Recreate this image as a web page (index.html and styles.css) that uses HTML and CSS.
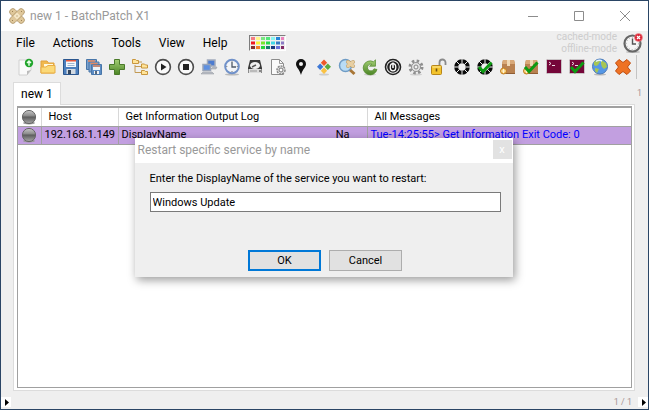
FILE: index.html
```html
<!DOCTYPE html>
<html lang="en">

<head>
    <meta charset="UTF-8">
    <meta name="viewport" content="width=device-width, initial-scale=1.0">
    <title>new 1 - BatchPatch X1</title>
    <link rel="stylesheet" href="styles.css">
</head>

<body>
    <!-- Shared shapes -->
    <svg class="defs" width="0" height="0" aria-hidden="true">
        <defs>
            <linearGradient id="ball" x1="0" y1="0" x2="0" y2="1">
                <stop offset="0" stop-color="#c8c8c8" />
                <stop offset=".42" stop-color="#8a8a8a" />
                <stop offset=".5" stop-color="#5c5c5c" />
                <stop offset="1" stop-color="#a9a9a9" />
            </linearGradient>
            <linearGradient id="green" x1="0" y1="0" x2="0" y2="1">
                <stop offset="0" stop-color="#a3cf74" />
                <stop offset="1" stop-color="#4c8526" />
            </linearGradient>
            <symbol id="status" viewBox="0 0 16 16">
                <ellipse cx="8" cy="14" rx="6" ry="1.5" fill="#999" />
                <circle cx="8" cy="8" r="6.6" fill="url(#ball)" stroke="#666" />
            </symbol>
            <symbol id="wheel" viewBox="0 0 18 18">
                <circle cx="9" cy="9" r="5.8" fill="none" stroke="#0a0a0a" stroke-width="4" />
                <path d="M9 0v5M9 13v5M0 9h5M13 9h5M2.6 2.6l3.6 3.6M11.8 11.8l3.6 3.6M15.4 2.6l-3.6 3.6M6.2 11.8l-3.6 3.6" stroke="#efefef" stroke-width="1" />
            </symbol>
            <symbol id="check" viewBox="0 0 18 18">
                <path d="M3 9l4 4.5L15.500 4.500" fill="none" stroke="#0d9a12" stroke-width="3" />
            </symbol>
            <symbol id="box" viewBox="0 0 18 18">
                <path d="M4 2h11l1 4v9H3V6z" fill="#b98150" />
                <path d="M4 2h11l1 4H3z" fill="#d8a878" />
                <path d="M8 2h3v6H8z" fill="#f0d8b5" />
                <path d="M3 15.500h13" stroke="#8f5d33" />
                <circle cx="4.500" cy="13" r="3" fill="#f6c35f" stroke="#c07d24" />
                <path d="M4.500 11v4M2.500 13h4" stroke="#fff5d5" />
            </symbol>
            <symbol id="console" viewBox="0 0 18 18">
                <rect x="1.500" y="1.500" width="15" height="14" rx="1" fill="#750639" stroke="#c9c4c6" />
                <path d="M4 4l2 1.500L4 7M7 7.500h3" fill="none" stroke="#eddbe4" />
            </symbol>
        </defs>
    </svg>

    <div class="window">
        <header class="titlebar">
            <svg class="app-icon" viewBox="0 0 16 16" aria-hidden="true">
                <g fill="#dfc79a" stroke="#a88e61" stroke-width=".7">
                    <rect x="-1" y="4.800" width="18" height="6.400" rx="3" transform="rotate(45 8 8)" />
                    <rect x="-1" y="4.800" width="18" height="6.400" rx="3" transform="rotate(-45 8 8)" />
                </g>
                <path d="M8 4.500L11.500 8 8 11.500 4.500 8z" fill="#f5e6c6" />
                <path d="M3 3h1v1H3zM12 3h1v1h-1zM3 12h1v1H3zM12 12h1v1h-1zM7.500 7.500h1v1h-1z" fill="#9d8255" />
            </svg>
            <h1>new 1 - BatchPatch X1</h1>
            <div class="window-buttons">
                <button aria-label="Minimize"><svg viewBox="0 0 10 10"><path d="M0 5.500h10" /></svg></button>
                <button aria-label="Maximize"><svg viewBox="0 0 10 10"><path d="M.5.5h9v9h-9z" /></svg></button>
                <button aria-label="Close"><svg viewBox="0 0 10 10"><path d="M0 0l10 10M10 0L0 10" /></svg></button>
            </div>
        </header>

        <div class="menubar">
            <nav>
                <button>File</button>
                <button>Actions</button>
                <button>Tools</button>
                <button>View</button>
                <button>Help</button>
            </nav>
            <button class="palette" aria-label="Row colors">
                <svg viewBox="0 0 35 14" aria-hidden="true">
                    <g stroke-width="3">
                        <path d="M1 2.500h4" stroke="#f47c82" /><path d="M6 2.500h4" stroke="#fff68b" /><path d="M11 2.500h4" stroke="#7be582" /><path d="M16 2.500h4" stroke="#50e878" /><path d="M21 2.500h4" stroke="#88f4f0" /><path d="M26 2.500h4" stroke="#2585d8" /><path d="M31 2.500h3" stroke="#ec82bd" />
                        <path d="M1 7h4" stroke="#f01822" /><path d="M6 7h4" stroke="#f9f23a" /><path d="M11 7h4" stroke="#78e52d" /><path d="M16 7h4" stroke="#25d94d" /><path d="M21 7h4" stroke="#42d9e7" /><path d="M26 7h4" stroke="#347bc4" /><path d="M31 7h3" stroke="#8b7bc4" />
                        <path d="M1 11.500h4" stroke="#852c31" /><path d="M6 11.500h4" stroke="#f37c27" /><path d="M11 11.500h4" stroke="#27d43a" /><path d="M16 11.500h4" stroke="#177a72" /><path d="M21 11.500h4" stroke="#17377e" /><path d="M26 11.500h4" stroke="#6771da" /><path d="M31 11.500h3" stroke="#812a65" />
                    </g>
                </svg>
            </button>
            <p class="modes">cached-mode<br>offline-mode</p>
            <svg class="clock" viewBox="0 0 20 20" aria-hidden="true">
                <ellipse cx="10" cy="19" rx="7" ry="1" fill="#bbb" />
                <circle cx="9.500" cy="10.500" r="8" fill="#f5f5f5" stroke="#666" stroke-width="2.200" />
                <circle cx="9.500" cy="10.500" r="6" fill="none" stroke="#aaa" stroke-dasharray="1 2" />
                <path d="M9.500 5.500V11H13" fill="none" stroke="#555" stroke-width="1.400" />
                <circle cx="15.500" cy="4.500" r="4" fill="#db2637" stroke="#f09aa0" stroke-width=".6" />
                <path d="M14 3l3 3M17 3l-3 3" stroke="#fff" stroke-width="1.200" />
            </svg>
        </div>

        <div class="toolbar">
            <button aria-label="New grid"><svg viewBox="0 0 18 18"><path d="M3 2h12v10l-4 5H3z" fill="#fafafa" stroke="#d0d0d0" /><path d="M15 12l-4 1v4z" fill="#bbb" /><circle cx="13" cy="5" r="4.200" fill="#22a52c" /><path d="M13 7.800V4M11 5l2-2 2 2" fill="none" stroke="#eaffea" stroke-width="1.500" /></svg></button>
            <button aria-label="Open"><svg viewBox="0 0 18 18"><path d="M2 15V3h6l1.500 2H15v10z" fill="#f1b84e" stroke="#e0a13c" /><path d="M5 6h9v4H5z" fill="#fff8df" /><path d="M2 9h5l2-1.500h7V15H2z" fill="#fbd978" stroke="#e9ad43" /></svg></button>
            <button aria-label="Save"><svg viewBox="0 0 18 18"><path d="M1.500 1.500h15v15h-15z" fill="#4c7fbd" stroke="#2b568e" /><path d="M4 2h10v7H4z" fill="#f5f8fc" /><path d="M4 2h10v1.500H4z" fill="#e4573b" /><path d="M5.500 5.500h7M5.500 7.500h7" stroke="#9fb6d0" /><path d="M4.500 11h9v5h-9z" fill="#d3dae2" /><path d="M6 12h3v4H6z" fill="#34465d" /></svg></button>
            <button aria-label="Save all"><svg viewBox="0 0 18 18"><g stroke="#4876a9"><path d="M1.500 1.500h10v10h-10z" fill="#7aa1ce" /><path d="M4 4h10v10H4z" fill="#7aa1ce" /><path d="M6.500 6.500h10v10h-10z" fill="#5c8dc5" /></g><path d="M3 3h7M5.500 5.500h7M8 8h7" stroke="#e48861" stroke-width="1.400" /><path d="M8 9h7v3H8zM9 13h5v3H9z" fill="#eef3f8" /><path d="M10 13h2v3h-2z" fill="#56687c" /></svg></button>
            <button aria-label="Add hosts"><svg viewBox="0 0 18 18"><path d="M6.500 1.500h5v5h5v5h-5v5h-5v-5h-5v-5h5z" fill="url(#green)" stroke="#4a7a2a" /></svg></button>
            <button aria-label="Host tree"><svg viewBox="0 0 18 18"><path d="M4 7v7.500h7M4 8.500h7M8 4h3" fill="none" stroke="#c29a54" /><g fill="#ffe49a" stroke="#c8963d"><path d="M1.500 5.500v-4h3l1 1h2v3zM10.500 10V6h3l1 1h2v3zM10.500 16.500v-4h3l1 1h2v3z" /></g></svg></button>
            <button aria-label="Start"><svg viewBox="0 0 18 18"><circle cx="9" cy="9" r="7.400" fill="#fafafa" stroke="#4d4d4d" stroke-width="1.600" /><path d="M7 5.500l5.500 3.500L7 12.500z" fill="#222" /></svg></button>
            <button aria-label="Stop"><svg viewBox="0 0 18 18"><circle cx="9" cy="9" r="7.400" fill="#fafafa" stroke="#4d4d4d" stroke-width="1.600" /><path d="M6 6h6v6H6z" fill="#222" /></svg></button>
            <button aria-label="Computers"><svg viewBox="0 0 18 18"><path d="M7.500 2h7.500v6H7.500z" fill="#4b7bd0" stroke="#a2acbd" stroke-width="1.500" /><path d="M3 6.500h7.500v6H3z" fill="#5e90e0" stroke="#98a4b8" stroke-width="1.500" /><path d="M1 16l2-2h9l2 2zM11 11l2-2h4l-1 2z" fill="#babec6" stroke="#92969d" stroke-width=".5" /></svg></button>
            <button aria-label="Scheduler"><svg viewBox="0 0 18 18"><ellipse cx="9" cy="16.500" rx="7" ry="1" fill="#bbb" /><circle cx="9" cy="8.500" r="6.800" fill="#f3f5f8" stroke="#7091c9" stroke-width="2" /><path d="M9 4v5h4" fill="none" stroke="#4f5968" stroke-width="1.300" /><path d="M9 2.800v1M9 13v1M3.300 8.500h1M13.800 8.500h1" stroke="#777" /></svg></button>
            <button aria-label="Disk space"><svg viewBox="0 0 18 18"><path d="M4 2h10l2 8v5H2v-5z" fill="#3a3a3a" /><path d="M2.500 11h13v4h-13z" fill="#ddd" /><ellipse cx="9" cy="7.500" rx="5" ry="3.500" fill="#f0f0f0" /><path d="M6 9l4-2" stroke="#555" stroke-width="1.500" /><path d="M4 13h7" stroke="#999" /><path d="M13 13h2" stroke="#333" /></svg></button>
            <button aria-label="File settings"><svg viewBox="0 0 18 18"><path d="M2.500 1.500h8l4 4v11h-12z" fill="#fafafa" stroke="#8c8c8c" /><path d="M10.500 1.500v4h4" fill="none" stroke="#999" /><circle cx="12" cy="12" r="4" fill="#e0e0e0" stroke="#888" stroke-width="1.500" stroke-dasharray="2 1" /><circle cx="12" cy="12" r="2" fill="#fff" stroke="#777" /></svg></button>
            <button aria-label="Location"><svg viewBox="0 0 18 18"><path d="M9 1a5 5 0 0 0-5 5c0 3.500 3.500 5 5 11 1.500-6 5-7.500 5-11a5 5 0 0 0-5-5z" fill="#111" /><circle cx="9" cy="6" r="2" fill="#f4f4f4" /></svg></button>
            <button aria-label="Windows update"><svg viewBox="0 0 18 18"><ellipse cx="9" cy="16.500" rx="5" ry="1" fill="#ccc" /><path d="M9 1.500l3.200 3.200L9 7.900 5.800 4.700z" fill="#ee5a2b" /><path d="M5.200 5.500l3.200 3.200-3.200 3.200L2 8.700z" fill="#3e78d6" /><path d="M12.800 5.500L16 8.700l-3.200 3.200-3.200-3.200z" fill="#5ba940" /><path d="M9 9.500l3.200 3.200L9 15.900l-3.200-3.200z" fill="#fac243" /></svg></button>
            <button aria-label="Find updates"><svg viewBox="0 0 18 18"><path d="M11 11l5.500 5" stroke="#a87636" stroke-width="3" /><circle cx="7.500" cy="7.500" r="6" fill="#b9dcf6" stroke="#6f9cc5" stroke-width="1.500" /><g stroke="#b79a68" stroke-width="4" stroke-linecap="round"><path d="M10 4l5 4M15 4l-5 4" /></g><path d="M10 4l5 4M15 4l-5 4" stroke="#e8cfa2" stroke-width="3" stroke-linecap="round" /></svg></button>
            <button aria-label="Reboot"><svg viewBox="0 0 18 18"><ellipse cx="9" cy="16.500" rx="6" ry="1" fill="#ccc" /><path d="M10.800 6.200A3.400 3.400 0 1 0 13 10.800l3 .7A7 7 0 1 1 12.500 3.700L14.500 1.800v6.400H8.500z" fill="url(#green)" stroke="#52862d" stroke-width=".7" /></svg></button>
            <button aria-label="Shutdown"><svg viewBox="0 0 18 18"><circle cx="9" cy="9" r="7.500" fill="#f4f4f4" stroke="#222" stroke-width="1.600" /><circle cx="9" cy="9" r="5.800" fill="#222" /><ellipse cx="9" cy="9.300" rx="2.800" ry="3.600" fill="none" stroke="#fff" stroke-width="1.300" /><path d="M9 4.500V10" stroke="#fff" stroke-width="1.500" /></svg></button>
            <button aria-label="Services"><svg viewBox="0 0 18 18"><ellipse cx="9" cy="16.500" rx="6" ry="1" fill="#d0d0d0" /><circle cx="9" cy="9" r="6" fill="none" stroke="#8f8f8f" stroke-width="3" stroke-dasharray="2.400 2.300" /><circle cx="9" cy="9" r="4.500" fill="#e2e2e2" stroke="#919191" /><circle cx="9" cy="9" r="2" fill="#efefef" stroke="#888" /></svg></button>
            <button aria-label="Unlock"><svg viewBox="0 0 18 18"><path d="M9.500 8V4.500a3 3 0 0 1 6 0V7" fill="none" stroke="#8a8a8a" stroke-width="1.800" /><rect x="1.500" y="7.500" width="10" height="9" rx="1" fill="#f3c32c" stroke="#b7861a" /><path d="M2.500 9h8" stroke="#ffec9c" /><path d="M6.500 10.500v3" stroke="#735310" stroke-width="1.600" /></svg></button>
            <button aria-label="Job queue"><svg><use href="#wheel" /></svg></button>
            <button aria-label="Run job queue"><svg><use href="#wheel" /><use href="#check" /></svg></button>
            <button aria-label="Deploy"><svg><use href="#box" /></svg></button>
            <button aria-label="Run deploy"><svg><use href="#box" /><use href="#check" /></svg></button>
            <button aria-label="Remote command"><svg><use href="#console" /></svg></button>
            <button aria-label="Run remote command"><svg><use href="#console" /><use href="#check" /></svg></button>
            <button aria-label="Internet"><svg viewBox="0 0 18 18"><ellipse cx="9" cy="16.500" rx="6" ry="1" fill="#bbb" /><circle cx="9" cy="8.500" r="7.500" fill="#5597e6" stroke="#4a7ab8" /><path d="M3 4c3-3 6-2 6 0L7 7 5 8 3 7zM10 2l5 3 1 4-3 2-2-2-1-3zM4 10l4 1-2 4-2-2z" fill="#a7c653" /><path d="M5 3.500q3-2 6-.5" stroke="#e7f5ff" fill="none" stroke-width="1.500" /></svg></button>
            <button aria-label="Remove"><svg viewBox="0 0 18 18"><path d="M5 1.500L9 4.500l4-3L16.500 5l-3 4 3 4-3.500 3.500L9 13.500l-4 3L1.500 13l3-4-3-4z" fill="#ee7224" stroke="#c14b0c" stroke-linejoin="round" /></svg></button>
        </div>

        <div class="tabs">
            <button class="tab">new 1</button>
            <span class="small">1</span>
        </div>

        <main class="tab-page">
            <div class="grid">
                <table>
                    <thead>
                        <tr>
                            <th class="col-status"><svg role="img" aria-label="Status"><use href="#status" /></svg></th>
                            <th class="col-host">Host</th>
                            <th class="col-log">Get Information Output Log</th>
                            <th>All Messages</th>
                        </tr>
                    </thead>
                    <tbody>
                        <tr>
                            <td class="col-status"><svg role="img" aria-label="Idle"><use href="#status" /></svg></td>
                            <td>192.168.1.149</td>
                            <td><div class="log"><span>DisplayName</span><span>Na</span></div></td>
                            <td class="message">Tue-14:25:55&gt; Get Information Exit Code: 0</td>
                        </tr>
                    </tbody>
                </table>
            </div>
        </main>

        <footer class="statusbar">
            <button class="arrow" aria-label="Expand left"><svg viewBox="0 0 10 10"><path d="M4 2l4 3.500L4 9z" /></svg></button>
            <span class="small">1 / 1</span>
            <button class="arrow" aria-label="Expand right"><svg viewBox="0 0 10 10"><path d="M4 2l4 3.500L4 9z" /></svg></button>
        </footer>
    </div>

    <!-- Restart service prompt -->
    <form class="dialog" role="dialog" aria-labelledby="dialog-title">
        <div class="dialog-title">
            <h2 id="dialog-title">Restart specific service by name</h2>
            <button type="button" class="dialog-close" aria-label="Close">x</button>
        </div>
        <div class="dialog-body">
            <label for="service">Enter the DisplayName of the service you want to restart:</label>
            <input type="text" id="service" value="Windows Update">
            <div class="dialog-buttons">
                <button type="button" class="default">OK</button>
                <button type="button">Cancel</button>
            </div>
        </div>
    </form>
</body>

</html>
```

FILE: styles.css
```css
* {
    box-sizing: border-box;
}

body {
    margin: 0;
    font-family: Roboto, "Liberation Sans", Arial, sans-serif;
    font-size: 11px;
    line-height: 14px;
    color: #000;
}

h1, h2, p {
    margin: 0;
    font-size: 12px;
    font-weight: normal;
}

button {
    padding: 0;
    border: none;
    background: none;
    color: inherit;
    font: inherit;
}

svg {
    display: block;
}

.defs {
    position: absolute;
}

.window {
    display: flex;
    flex-direction: column;
    min-height: 100vh;
    border: 1px solid #2a4565;
    background-color: #efefef;
}

/* Title bar */
.titlebar {
    display: flex;
    align-items: center;
    height: 30px;
    padding-left: 8px;
    background-color: #fff;
    color: #999;
}

.app-icon {
    width: 16px;
    height: 16px;
    margin-right: 5px;
}

.window-buttons {
    display: flex;
    margin-left: auto;
}

.window-buttons button {
    display: flex;
    align-items: center;
    justify-content: center;
    width: 46px;
    height: 30px;
}

.window-buttons svg {
    width: 10px;
    height: 10px;
    fill: none;
    stroke: #8c8c8c;
}

/* Menu */
.menubar {
    display: flex;
    align-items: center;
    height: 24px;
    padding: 0 5px 0 15px;
}

.menubar nav {
    display: flex;
    gap: 18px;
    font-size: 12px;
}

.palette {
    width: 37px;
    height: 16px;
    margin-left: 22px;
    border: 1px solid #7d7d7d;
    border-right-color: #fff;
    border-bottom-color: #fff;
}

.modes {
    margin-left: auto;
    color: #cdcdcd;
    font-size: 10px;
    line-height: 12px;
    text-align: right;
}

.clock {
    width: 20px;
    height: 20px;
    margin-left: 6px;
}

/* Toolbar */
.toolbar {
    display: flex;
    height: 24px;
    margin: 0 11px 0 12px;
    border-right: 1px solid #c4c4c4;
}

.toolbar button {
    display: flex;
    align-items: center;
    justify-content: center;
    width: 23px;
    height: 24px;
}

.toolbar svg {
    width: 18px;
    height: 18px;
}

/* Tabs */
.tabs {
    display: flex;
    align-items: center;
    justify-content: space-between;
    padding: 3px 6px 0 12px;
}

.tab {
    z-index: 1;
    height: 23px;
    margin-bottom: -1px;
    padding: 0 7px;
    border: 1px solid #dcdcdc;
    border-bottom: none;
    background-color: #fff;
    font-size: 12px;
}

.small {
    color: #a89595;
    font-size: 9px;
}

.tab-page {
    display: flex;
    flex: 1;
    margin: 0 13px 0 12px;
    padding: 1px 2px 2px 3px;
    border: 1px solid #dcdcdc;
    background-color: #fff;
}

.grid {
    flex: 1;
    border: 1px solid #a0a0a0;
    border-top-width: 2px;
}

table {
    width: 100%;
    border-collapse: collapse;
    table-layout: fixed;
}

th, td {
    height: 18px;
    padding: 0 3px;
    border-right: 1px solid #d8d8d8;
    border-bottom: 1px solid #a0a0a0;
    font-weight: normal;
    text-align: left;
    white-space: nowrap;
}

th {
    padding-left: 7px;
}

th:last-child,
td:last-child {
    border-right: none;
}

td {
    border-right-color: #a0a0a0;
    background-color: #c29fe0;
}

.col-status {
    width: 23px;
    padding: 0 3px;
}

.col-status svg {
    width: 16px;
    height: 16px;
}

.col-host {
    width: 77px;
}

.col-log {
    width: 249px;
}

.log {
    display: flex;
    justify-content: space-between;
    padding-right: 14px;
}

.message {
    color: #00f;
}

/* Status bar */
.statusbar {
    display: flex;
    align-items: center;
    height: 18px;
    padding-top: 3px;
}

.statusbar .small {
    margin-left: auto;
    margin-right: 6px;
}

.arrow {
    width: 10px;
    height: 10px;
    background-color: #fff;
}

/* Dialog */
.dialog {
    position: absolute;
    top: calc(50% - 67px);
    left: calc(50% - 190px);
    width: 378px;
    background-color: #efefef;
    box-shadow: 2px 3px 9px rgba(0, 0, 0, 0.4);
}

.dialog-title {
    display: flex;
    justify-content: space-between;
    height: 25px;
    padding: 2px 1px 0 3px;
    background-color: #fff;
}

.dialog-title h2 {
    color: #999;
    line-height: 20px;
}

.dialog-close {
    width: 19px;
    height: 19px;
    background-color: #e2e2e2;
    color: #fff;
}

.dialog-body {
    padding: 9px 12px 6px 15px;
}

.dialog-body label,
.dialog-body input {
    display: block;
}

.dialog-body input {
    width: 100%;
    height: 20px;
    margin-top: 6px;
    padding: 0 2px;
    border: 1px solid #7a7a7a;
    background-color: #fff;
    font: inherit;
}

.dialog-buttons {
    display: flex;
    justify-content: center;
    gap: 8px;
    margin-top: 38px;
}

.dialog-buttons button {
    width: 73px;
    height: 21px;
    border: 1px solid #adadad;
    background-color: #e1e1e1;
}

.dialog-buttons .default {
    border: 2px solid #0078d7;
}
```
